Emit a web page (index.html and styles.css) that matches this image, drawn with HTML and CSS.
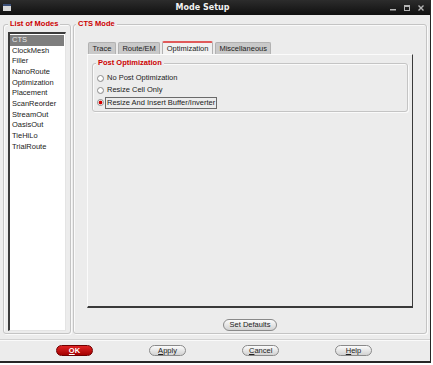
FILE: index.html
```html
<!DOCTYPE html>
<html lang="en">
<head>
  <meta charset="UTF-8">
  <title>Mode Setup</title>
  <link rel="stylesheet" href="styles.css">
</head>
<body>
 <div class="window">
   <!-- title bar -->
   <div class="titlebar">
     <svg class="app-icon" viewBox="0 0 8 7"><rect x="0" y="0" width="8" height="7" fill="#d8d8d8"/><rect x="0" y="0" width="8" height="2" fill="#3b4f78"/></svg>
     <div class="title">Mode Setup</div>
     <div class="controls">
       <svg viewBox="0 0 6 6"><rect x="0" y="4" width="6" height="1.5" fill="#b4b4b4"/></svg>
       <svg viewBox="0 0 6 6"><rect x="0.5" y="0.5" width="5" height="5" fill="none" stroke="#b4b4b4" stroke-width="1"/><rect x="0.5" y="0.5" width="5" height="1.5" fill="#b4b4b4"/></svg>
       <svg viewBox="0 0 6 6"><path d="M0.5 0.5 5.5 5.5M5.5 0.5 0.5 5.5" stroke="#b4b4b4" stroke-width="1.4"/></svg>
     </div>
   </div>

   <div class="content">
     <fieldset class="group modes">
       <legend>List of Modes</legend>
       <ul class="listbox">
         <li class="sel">CTS</li>
         <li>ClockMesh</li>
         <li>Filler</li>
         <li>NanoRoute</li>
         <li>Optimization</li>
         <li>Placement</li>
         <li>ScanReorder</li>
         <li>StreamOut</li>
         <li>OasisOut</li>
         <li>TieHiLo</li>
         <li>TrialRoute</li>
       </ul>
     </fieldset>

     <fieldset class="group mode">
       <legend>CTS Mode</legend>
       <div class="tabs">
         <span class="tab">Trace</span>
         <span class="tab">Route/EM</span>
         <span class="tab active">Optimization</span>
         <span class="tab">Miscellaneous</span>
       </div>
       <div class="tabpanel">
         <fieldset class="group post">
           <legend>Post Optimization</legend>
           <div class="radio"><span class="dot"></span><span class="lbl">No Post Optimization</span></div>
           <div class="radio"><span class="dot"></span><span class="lbl">Resize Cell Only</span></div>
           <div class="radio on"><span class="dot"></span><span class="lbl">Resize And Insert Buffer/Inverter</span></div>
         </fieldset>
       </div>
       <div class="defaults"><button class="btn">Set Defaults</button></div>
     </fieldset>
   </div>

   <div class="footer">
     <button class="btn ok"><u>O</u>K</button>
     <button class="btn"><u>A</u>pply</button>
     <button class="btn"><u>C</u>ancel</button>
     <button class="btn"><u>H</u>elp</button>
   </div>
 </div>
</body>
</html>
```

FILE: styles.css
```css
:root{--bg:#ececec;--red:#cc0000;--dark:#3a3a3a;--line:#c4c4c4}
*{box-sizing:border-box;margin:0;padding:0}
body{background:#fff;font-family:'Liberation Sans',Arial,sans-serif;font-size:7.5px;color:#222}
.window{width:431px;height:363px;display:flex;flex-direction:column;background:var(--bg);border-right:1px solid #262626;border-bottom:2px solid #262626}

/* title bar */
.titlebar{height:15px;display:flex;align-items:center;background:linear-gradient(#2c2c2c,#101010);padding:0 6px 0 3px}
.app-icon{width:8px;height:7px;display:block}
.title{flex:1;text-align:center;color:#f2f2f2;font:bold 8px 'DejaVu Sans',sans-serif;padding-left:4px}
.controls{display:flex;gap:8px;align-items:center}
.controls svg{width:6px;height:6px;display:block}

/* body */
.content{flex:1;display:flex;gap:2px;padding:4px 3px 5px 3px;min-height:0}
.group{border:1px solid var(--line);border-radius:3px;box-shadow:inset 1px 1px 0 #fafafa,1px 1px 0 #fafafa;min-width:0}
.group legend{font-weight:bold;color:var(--red);line-height:10px;padding:0 2px;background:var(--bg)}

.modes{width:68px;padding:3px 4px 2px;display:flex;flex-direction:column}
.modes legend{margin-left:0}
.listbox{flex:1;list-style:none;background:#fff;border-style:solid;border-width:2px 1px 1px 2px;border-color:var(--dark) #e4e4e4 #e4e4e4 var(--dark);padding:1px 1px 0 0}
.listbox li{height:10.67px;line-height:10.67px;padding-left:2px;white-space:nowrap}
.listbox li.sel{background:#7e7e7e;color:#e8e8e8}

.mode{flex:1;padding:12px 13px 2px;display:flex;flex-direction:column}
.mode legend{margin-left:-11px}
.tabs{display:flex;align-items:flex-end;gap:2px;padding-left:1px}
.tab{height:12px;line-height:11px;padding:0 3.5px;background:#c9c9c9;border:1px solid #b2b2b2;border-bottom:none;border-radius:2px 2px 0 0;white-space:nowrap}
.tab.active{height:13px;background:#f1f1f1;border-top:2px solid #e05a5a;line-height:11px}
.tabpanel{flex:1;padding:3px 4px;border-style:solid;border-width:1px 1px 2px 1px;border-color:#fbfbfb var(--dark) var(--dark) #fbfbfb}

.post{padding:4px 4px 2px}
.post legend{margin-left:-1px}
.radio{height:12.3px;display:flex;align-items:center;gap:1px}
.dot{width:7px;height:7px;border-radius:50%;border:1px solid #8e8e8e;background:radial-gradient(circle at 40% 35%,#fff 0 45%,#d6d6d6 100%)}
.radio.on .dot{background:radial-gradient(circle,#d40000 0 1.6px,#fff 2.2px,#e0e0e0 100%)}
.lbl{border:1px solid transparent;padding:0 1px;line-height:10px}
.radio.on .lbl{border-color:#6a6a6a}

.defaults{display:flex;justify-content:center;margin-top:11px}

/* buttons */
.btn{height:12px;padding:0 6px;border:1px solid #8a8a8a;border-radius:6px;background:linear-gradient(#fbfbfb,#d2d2d2);font:7.5px 'Liberation Sans',Arial,sans-serif;color:#222;line-height:10px}
.footer{height:22px;display:grid;grid-template-columns:repeat(4,93px);padding-left:28px;align-items:center;justify-items:center;border-top:1px solid #d2d2d2;box-shadow:inset 0 1px 0 #fafafa}
.footer .btn{width:37px;height:11px;line-height:9px}
.footer .ok{background:linear-gradient(#e02424,#a40000);border-color:#6e0000;color:#fff;font-weight:bold}
```
